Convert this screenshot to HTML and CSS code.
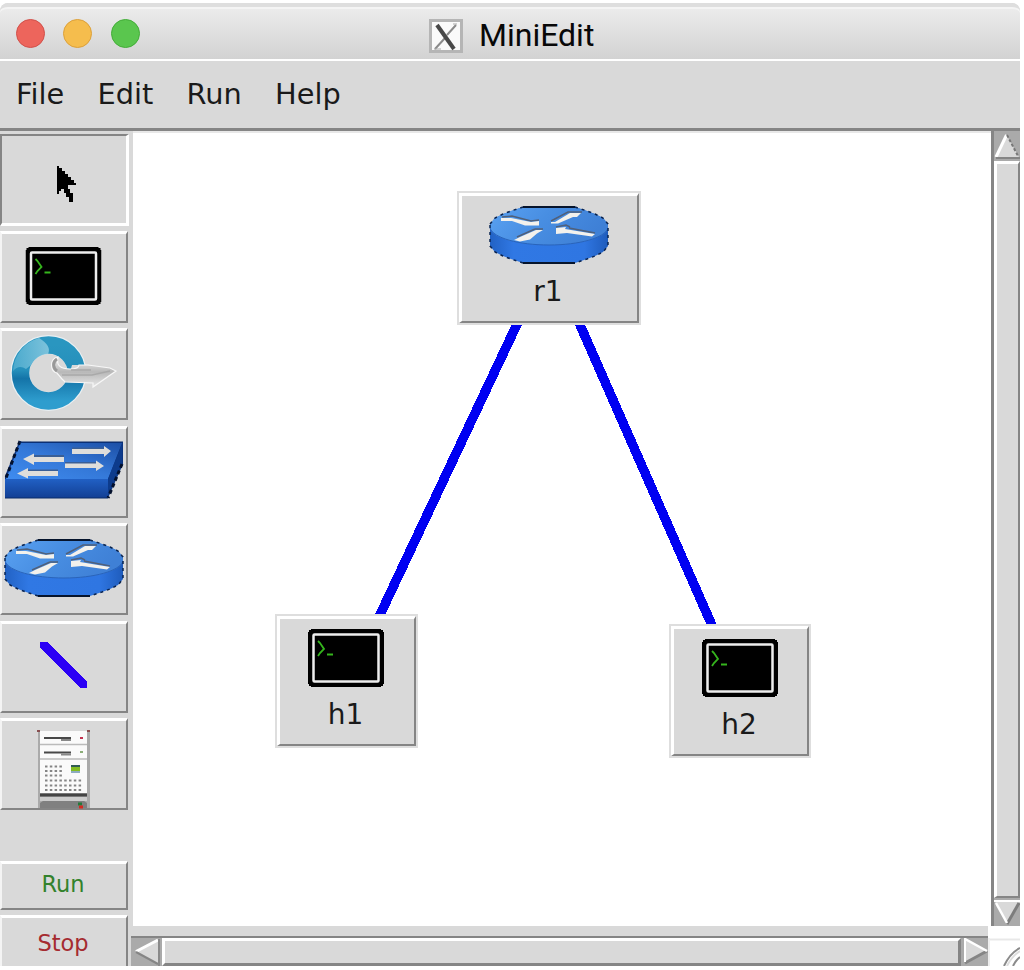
FILE: index.html
```html
<!DOCTYPE html>
<html lang="en">
<head>
<meta charset="utf-8">
<title>MiniEdit</title>
<link rel="stylesheet" href="styles.css">
</head>
<body>
<svg class="defs" width="0" height="0">
  <defs>
    <linearGradient id="rTop" x1="0" x2="1" y1="0" y2=".3"><stop offset="0" stop-color="#5aa2f2"/><stop offset=".5" stop-color="#488ee2"/><stop offset="1" stop-color="#3f80d6"/></linearGradient>
    <linearGradient id="rSide" x1="0" x2="1"><stop offset="0" stop-color="#2262c4"/><stop offset=".2" stop-color="#3078e4"/><stop offset=".8" stop-color="#2f76e2"/><stop offset="1" stop-color="#1f5cbc"/></linearGradient>
    <linearGradient id="sTop" x1="0" x2="1" y1="1" y2="0"><stop offset="0" stop-color="#3f8cf0"/><stop offset=".5" stop-color="#3478d8"/><stop offset="1" stop-color="#1c4fa6"/></linearGradient>
    <linearGradient id="sFront" x1="0" x2="0" y1="0" y2="1"><stop offset="0" stop-color="#2160c4"/><stop offset="1" stop-color="#123f94"/></linearGradient>
    <linearGradient id="ring" x1="0" x2="0" y1="0" y2="1"><stop offset="0" stop-color="#2a96c0"/><stop offset=".45" stop-color="#258fbb"/><stop offset=".6" stop-color="#1474a8"/><stop offset="1" stop-color="#2e9dce"/></linearGradient>
    <linearGradient id="shine" x1="0" x2="1"><stop offset="0" stop-color="#5ab4d4"/><stop offset="1" stop-color="#a0d6e8"/></linearGradient>
    <linearGradient id="metal" x1="0" x2="0" y1="0" y2="1"><stop offset="0" stop-color="#f4f4f4"/><stop offset=".5" stop-color="#b8b8b8"/><stop offset="1" stop-color="#e8e8e8"/></linearGradient>
    <symbol id="router" viewBox="0 0 120 58">
      <path d="M1 18L6 12L14 8L22 5L34 1H86L98 5L106 8L114 12L119 18V40L114 46L106 50L98 53L86 57H34L22 53L14 50L6 46L1 40z" fill="url(#rSide)"/>
      <path d="M1 18L6 12L14 8L22 5L34 1H86L98 5L106 8L114 12L119 18V22C117 32 91 39 60 39S3 32 1 22z" fill="url(#rTop)"/>
      <path d="M1 22c3 10 29 17 59 17s56-7 59-17" fill="none" stroke="#2a64ba" stroke-width="1"/>
      <path d="M1 18L6 12L14 8L22 5L34 1M86 1L98 5L106 8L114 12L119 18V40L114 46L106 50L98 53L86 57M34 57L22 53L14 50L6 46L1 40V18" fill="none" stroke="#0a2450" stroke-width="1.500" stroke-dasharray="3 4"/>
      <path d="M34 1h52M34 57h52" stroke="#06142c" stroke-width="2"/>
      <path d="M13 11l10-1 19 5 8-1M62 15l17-9h14M46 23h8M28 31l18-8M67 21l10-2 4 2M80 22l26 5" fill="none" stroke="#50607a" stroke-width="1.500"/>
      <path d="M12 12h10l20 4 8-1v4.500H36l-13-4.500H12zM62 16h4l15-9h11l-4 4h-4l-15 6.500h-7zM54 24h-7l-16 7-6 3 6 1.500 10-2 7-6zM67 22l10-1-1 2 30 5-3 2.500-25-3.500-11 1z" fill="#f3f1ec"/>
    </symbol>
    <symbol id="terminal" viewBox="0 0 76 58">
      <path d="M3 0h70v1h2v2h1v52h-1v2h-2v1H3v-1H1v-2H0V3h1V1h2z" fill="#000"/>
      <rect x="5.5" y="5.500" width="65" height="47" rx="1" fill="#000" stroke="#eee" stroke-width="2.500"/>
      <path d="M10 12l2 2 4 6-4 4-2 3" fill="none" stroke="#35b51d" stroke-width="1.800"/>
      <path d="M19 25.500h6" stroke="#35b51d" stroke-width="2"/>
    </symbol>
  </defs>
</svg>
<div class="window">
  <header class="titlebar">
    <div class="lights"><i class="light red"></i><i class="light yellow"></i><i class="light green"></i></div>
    <div class="caption">
      <svg width="34" height="36" viewBox="0 0 34 36">
        <rect x="1.500" y="2.500" width="31" height="31" fill="#fafafa" stroke="#b5b5b5" stroke-width="3"/>
        <path d="M27 7L18 17M16 20L6 31" stroke="#8b8b8b" stroke-width="2"/>
        <path d="M5 31h7M24 6h4" stroke="#aaa" stroke-width="1"/>
        <path d="M8 7l17 24" stroke="#484848" stroke-width="4"/>
      </svg>
      <span>MiniEdit</span>
    </div>
  </header>
  <nav class="menubar"><span>File</span><span>Edit</span><span>Run</span><span>Help</span></nav>
  <div class="body">
    <aside class="sidebar">
      <div class="tool active"><svg width="128" height="92" viewBox="0 0 128 92"><path shape-rendering="crispEdges" d="M57 32h2v2h3v3h3v3h3v3h3v3h3v3h2v2h-8v4h2v4h3v9h-4v-5h-3v-4h-2v-4h-3v2h-2v3h-2z"/></svg></div>
      <div class="tool"><svg width="128" height="92"><use href="#terminal" x="25.500" y="16" width="76" height="58"/></svg></div>
      <div class="tool"><svg width="128" height="92" viewBox="0 0 128 92">
        <circle cx="48.500" cy="45" r="28.500" fill="none" stroke="#e9eff2" stroke-width="19"/>
        <circle cx="48.500" cy="45" r="28" fill="none" stroke="url(#ring)" stroke-width="17.500"/>
        <path d="M13 43A36 36 0 0 1 39 10Q52 18 48 26Q36 27 31 37L26 41Q19 36 13 43z" fill="url(#shine)" opacity=".7"/>
        <path d="M72 37h16v15H68z" fill="#d9d9d9"/>
        <path d="M58 29c-9 2-8 14-1 16l5 6 3 3 28 1v4l23-16-6-3-22-3H79c0 3-4 4-9 4-9 0-14-3-12-12z" fill="url(#metal)" stroke="#f7f7f7" stroke-width="1.200"/>
        <path d="M57 31c-5 3-4 9 0 12" fill="none" stroke="#999" stroke-width="3"/>
        <path d="M62 47h30l18-4M71 42h20" fill="none" stroke="#a9a9a9" stroke-width="1.300"/>
      </svg></div>
      <div class="tool"><svg width="128" height="92" viewBox="0 0 128 92">
        <path d="M19 16h104v22l-15 34H5V50z" fill="#0c3480"/>
        <path d="M20 17h102l-14 36H6z" fill="url(#sTop)"/>
        <path d="M5 53h103v19H5z" fill="url(#sFront)"/>
        <path d="M108 53l14-35v20l-14 33z" fill="#0d3b8c"/>
        <path d="M20 15L6 52" stroke="#03102c" stroke-width="3" stroke-dasharray="4 3"/>
        <path d="M122 38l-14 34" stroke="#03102c" stroke-width="3" stroke-dasharray="4 3"/>
        <path d="M19 16h104M5 72h103" stroke="#0b2d6a" stroke-width="1"/>
        <path d="M72 22.500h32M65 37h31M34 30h30M28 44.500h30" stroke="#3a5f96" stroke-width="2"/>
        <path d="M72 23h32v-3l7 5-7 6V28H72zM65 37.500h31v-3l8 5.500-8 5v-3H65zM64 31H34v-3.500L23 33l11 6v-3h30zM58 45H28v-3l-11 5.500 11 5V50h30z" fill="#dfdedb"/>
      </svg></div>
      <div class="tool"><svg width="128" height="92"><use href="#router" x="4" y="16" width="120" height="58"/></svg></div>
      <div class="tool"><svg width="128" height="92" viewBox="0 0 128 92"><path d="M40 21h7l40 39v7h-6L40 27z" fill="#2b00f5" shape-rendering="crispEdges"/></svg></div>
      <div class="tool"><svg width="128" height="92" viewBox="0 0 128 92">
        <path d="M38 13h52v77H38z" fill="#aaa"/><path d="M40 13h47v62H40z" fill="#fafafa"/>
        <path d="M37 13h3M87 13h3" stroke="#884f50" stroke-width="2"/>
        <path d="M40 26.500h47M40 41h47" stroke="#bbb" stroke-width="1.500"/>
        <path d="M44 20h27M44 34.500h27" stroke="#484848" stroke-width="2"/><path d="M61 22h10M61 36.500h10" stroke="#888" stroke-width="2"/>
        <path d="M80 20h3" stroke="#c33350" stroke-width="2"/><path d="M80 34h3" stroke="#8bae78" stroke-width="2"/>
        <path d="M45 48.500h17M45 53h17M45 57.500h17M45 62.500h37M45 67.500h37M45 72h37" stroke="#858585" stroke-width="2" stroke-dasharray="2.500 2.300"/>
        <path d="M71 48h9" stroke="#315b54" stroke-width="2"/><path d="M71 51h9" stroke="#83bd22" stroke-width="4"/><path d="M71 54h9" stroke="#8eacc0" stroke-width="2"/>
        <path d="M40 77h47" stroke="#444" stroke-width="3"/><path d="M40 79h47v4H40z" fill="#ccc"/><path d="M40 90v-5l3-2h41l3 2v5z" fill="#808080"/>
        <path d="M78 86h4" stroke="#247a3a" stroke-width="3"/><path d="M79 89h4" stroke="#d52a20" stroke-width="3"/>
      </svg></div>
      <div class="action run">Run</div>
      <div class="action stop">Stop</div>
    </aside>
    <main class="canvas">
      <svg class="links" width="858" height="793" viewBox="133 133 858 793" shape-rendering="crispEdges"><path d="M519 320L378 619M577 318L714 630" stroke="#0000f2" stroke-width="9.500" fill="none"/></svg>
      <div class="node r1"><svg width="120" height="58"><use href="#router" width="120" height="58"/></svg><span>r1</span></div>
      <div class="node h1"><svg width="76" height="58"><use href="#terminal" width="76" height="58"/></svg><span>h1</span></div>
      <div class="node h2"><svg width="76" height="58"><use href="#terminal" width="76" height="58"/></svg><span>h2</span></div>
    </main>
    <div class="vscroll">
      <svg width="26" height="28" viewBox="0 0 26 28"><path d="M12.500 4L25 26H1z" fill="#d9d9d9"/><path d="M2 26L12.500 4" stroke="#fff" stroke-width="3"/><path d="M13 4l11 21" stroke="#777" stroke-width="2" stroke-dasharray="3 2"/><path d="M2 27h24" stroke="#858585" stroke-width="2"/></svg>
      <div class="thumb"></div>
      <svg width="26" height="26" viewBox="0 0 26 26"><path d="M1 2h25L13 24z" fill="#d9d9d9"/><path d="M25 3L13 24" stroke="#7d7d7d" stroke-width="3"/><path d="M2 3l11 20" stroke="#fff" stroke-width="2.500"/><path d="M0 1h26" stroke="#fff" stroke-width="2"/></svg>
    </div>
    <div class="hscroll">
      <svg width="27" height="28" viewBox="0 0 27 28"><path d="M3 13.500L25 2v24z" fill="#d9d9d9"/><path d="M3 13.500L25 2" stroke="#fff" stroke-width="3"/><path d="M3 14l22 12" stroke="#858585" stroke-width="2"/><path d="M26 1v27" stroke="#8a8a8a" stroke-width="2"/></svg>
      <div class="thumb"></div>
      <svg width="24" height="28" viewBox="0 0 24 28"><path d="M1 1l22 12L1 25z" fill="#d9d9d9"/><path d="M1 25l22-12" stroke="#858585" stroke-width="3"/><path d="M1 1l22 12" stroke="#fff" stroke-width="2.500"/><path d="M1 0v24" stroke="#fff" stroke-width="2"/></svg>
    </div>
    <svg class="grip" width="32" height="40" viewBox="0 0 32 40"><path d="M0 13.500h32" stroke="#e8e8e8" stroke-width="2"/><path d="M1 12v28" stroke="#eee" stroke-width="2"/><path d="M16 40Q22 27 32 22M25 40Q28 34 32 31" fill="none" stroke="#8b8b8b" stroke-width="2"/><path d="M19 40Q24 30 32 25" fill="none" stroke="#ddd" stroke-width="2"/></svg>
  </div>
</div>
</body>
</html>
```
FILE: styles.css
```css
body { margin: 0; background: #fff; font-family: "DejaVu Sans", sans-serif; color: #1a1a1a; }
* { box-sizing: border-box; }
svg { display: block; flex: none; }
.defs { position: absolute; }
.window { width: 1020px; height: 963px; margin-top: 3px; overflow: hidden; background: #d9d9d9; border-radius: 8px 8px 0 0; }
.titlebar {
  height: 58px; display: grid; grid-template-columns: 429px 1fr;
  background: linear-gradient(#ececec, #d2d2d2);
  border-top: 4px solid #dedede; border-bottom: 2px solid #fff; border-radius: 8px 8px 0 0;
  box-shadow: inset 0 2px #f4f4f4;
}
.lights { display: flex; gap: 18.5px; padding: 11.5px 0 0 15.5px; }
.light { width: 29px; height: 29px; border-radius: 50%; border: 1.5px solid; }
.red { background: #ed655c; border-color: #d1504a; }
.yellow { background: #f5bd4d; border-color: #dca03a; }
.green { background: #5ac64e; border-color: #43ad38; }
.caption { display: flex; gap: 16px; padding-top: 11px; font: 32px/34px Roboto, sans-serif; color: #080808; }
.menubar { height: 70px; display: flex; gap: 33.3px; padding: 15px 0 0 16px; font-size: 28.8px; line-height: 36px; border-bottom: 3px solid #858585; }
.body { display: grid; grid-template-columns: 133px 855px 3px 29px; grid-template-rows: 795px 40px; }
.sidebar {
  grid-row: 1 / 3; display: grid; padding-top: 3px; align-content: start;
  grid-template-rows: 97px 97px 98px 97px 98px 97px 143px 54px 52px;
}
.tool, .action { width: 128px; height: 92px; background: #d9d9d9; border: solid; border-width: 3px 2px 2px 2px; border-color: #fff #858585 #858585 #f4f4f4; }
.tool svg { margin: -3px 0 0 -2px; }
.tool.active { width: 129px; border-color: #858585 #fff #fff #858585; border-width: 2px 3px 3px 2px; }
.tool.active svg { margin-top: -2px; }
.action { height: 49px; font-size: 22.5px; line-height: 40px; text-align: center; padding-right: 2px; }
.run { color: #33822c; }
.stop { height: 60px; color: #a52b30; line-height: 50px; }
.canvas { grid-column: 2 / 4; position: relative; background: #fff; border-top: 2px solid #e8e8e8; }
.links { position: absolute; left: 0; top: 0; }
.node {
  position: absolute; display: flex; flex-direction: column; align-items: center;
  padding: 10px 2px 0 0; background: #d9d9d9;
  border: solid; border-width: 3px 2px 2px 3px; border-color: #fff #858585 #858585 #fff;
  outline: 2px solid #dedede; font-size: 28px; line-height: 32px;
}
.node span { margin: 12px 1px 0 0; }
.r1 { left: 326px; top: 60px; width: 180px; height: 130px; }
.h1 { left: 144px; top: 483px; width: 139px; height: 130px; }
.h2 { left: 538px; top: 493px; width: 138px; height: 130px; }
.vscroll { grid-column: 4; border-left: 3px solid #858585; background: #aaa; display: flex; flex-direction: column; width: 29px; }
.vscroll .thumb { flex: 1; margin: 2px 0 2px; border: solid; border-width: 3px 2px 2px 3px; border-color: #fff #858585 #858585 #fff; background: #d9d9d9; }
.hscroll {
  grid-column: 2; grid-row: 2; margin-left: -2px; margin-top: 10px; height: 30px; border-top: 2px solid #858585;
  background: #aaa; display: flex; padding-left: 2px;
}
.hscroll .thumb { flex: 1; margin: 0 3px 0 2px; border: solid; border-width: 3px 3px 3px 3px; border-color: #fff #858585 #858585 #fff; background: #d9d9d9; }
.grip { grid-column: 3 / 5; grid-row: 2; background: #fff; }
```
